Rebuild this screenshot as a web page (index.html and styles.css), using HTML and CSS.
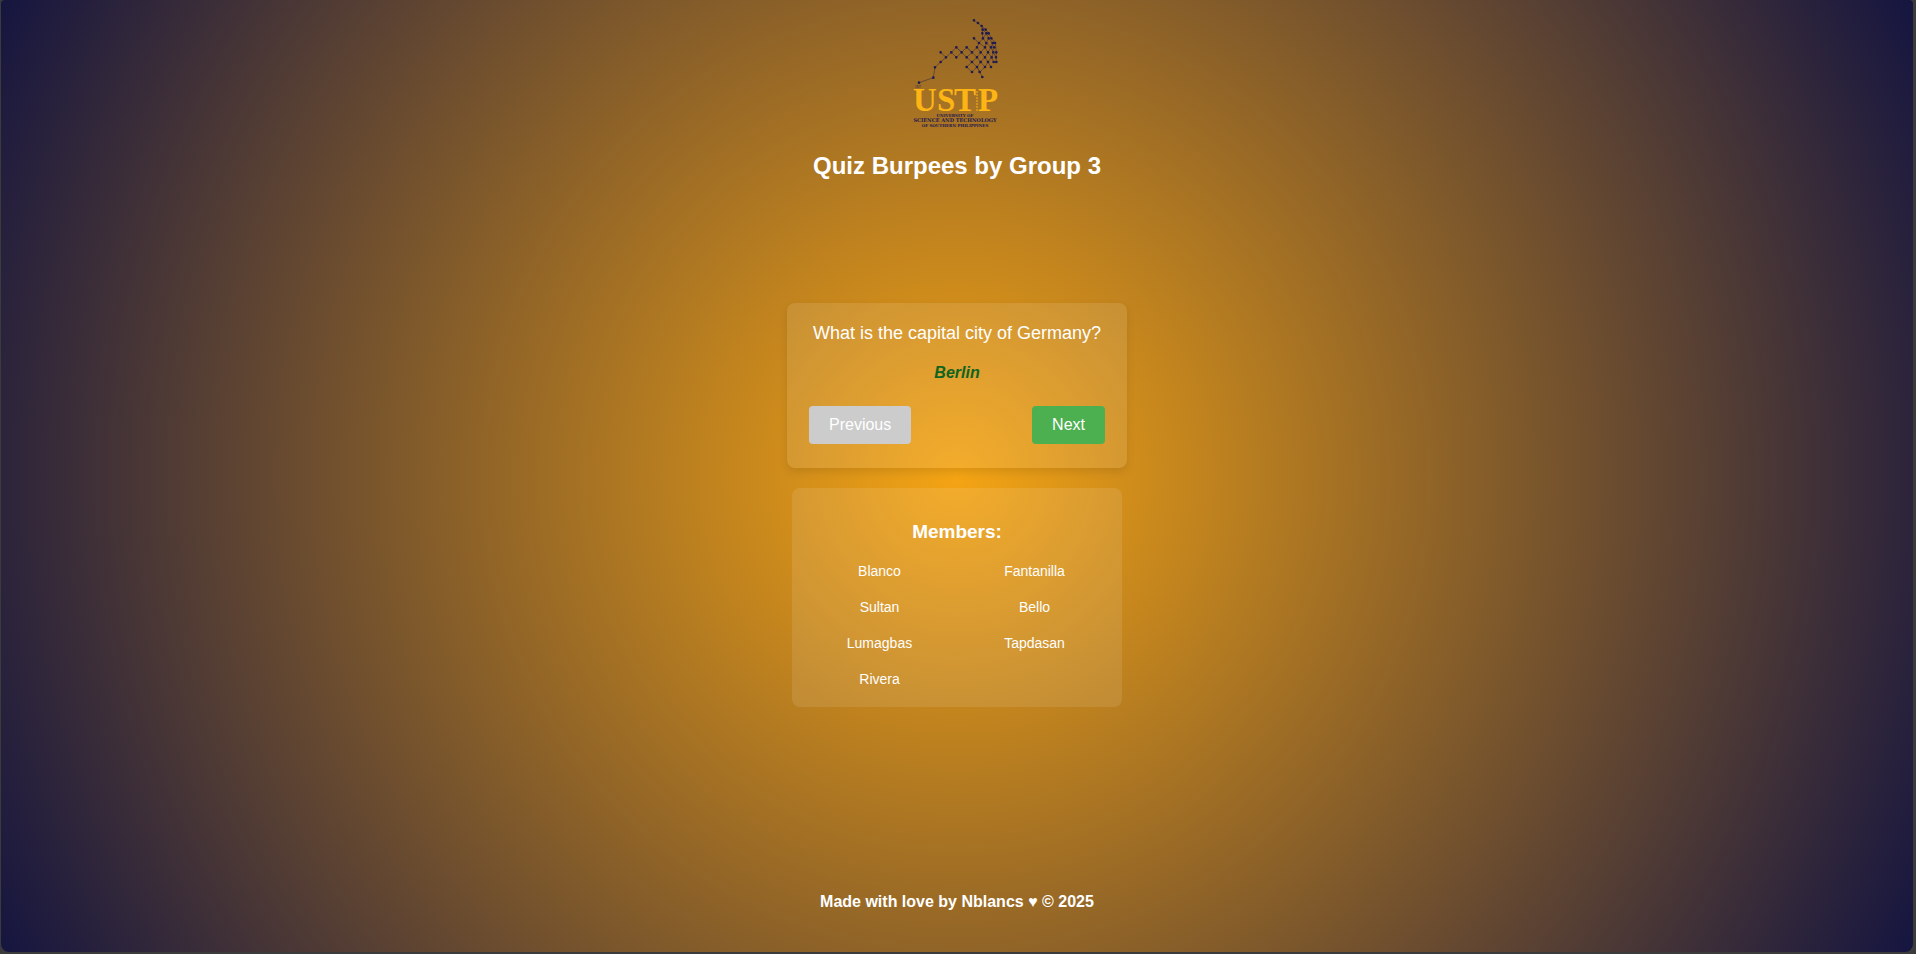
FILE: index.html
```
<!DOCTYPE html>
<html lang="en">
<head>
<meta charset="utf-8">
<title>Quiz Burpees</title>
<link rel="stylesheet" href="styles.css">
</head>
<body>
<div class="page">
  <header class="header">
    <svg class="logo" viewBox="7 0 100 120" role="img" aria-label="USTP logo">
      <g transform="scale(0.3333) translate(-30 -30)">
        <path class="logo-lines" d="M87 248L130 233L135 202L152 186L168 172L184 157L199 142L215 157L230 172L246 186L261 201L277 231M152 157L168 172M184 157L199 172L215 157L230 142L246 157L261 172L272 186L285 201M199 142L215 157M230 142L246 157L230 172M230 201L246 216L261 201L272 186L285 172L294 157L303 142L308 129M230 201L246 186L261 172L272 157L285 142L289 129L296 115M246 157L261 142L267 129L279 115L289 100M252 115L267 129L285 142L294 157L305 172L311 186M261 142L272 157L285 172L294 186L303 201M261 201L270 216L285 201L294 186L305 172L310 157M252 61L264 69L275 78L287 89L296 100L305 115L316 129L319 157L318 172L319 186L311 186M275 78L278 89L277 100L279 115L289 129L303 142L310 157L318 172M278 89L289 100L296 115L308 129L310 157"/>
        <path class="logo-dots" d="M87 248h0M130 233h0M135 202h0M152 186h0M168 172h0M152 157h0M184 157h0M199 142h0M199 172h0M215 157h0M230 142h0M230 172h0M246 157h0M246 186h0M230 201h0M246 216h0M261 142h0M261 172h0M261 201h0M277 231h0M269 216h0M272 157h0M272 186h0M285 142h0M285 172h0M285 201h0M294 157h0M294 186h0M303 142h0M303 201h0M305 172h0M310 157h0M311 186h0M319 157h0M318 172h0M319 186h0M252 115h0M267 129h0M289 129h0M308 129h0M315 129h0M279 115h0M296 115h0M304 115h0M277 100h0M289 100h0M296 100h0M278 89h0M287 89h0M252 61h0M264 69h0M275 78h0M313 142h0"/>
      </g>
      <text class="logo-year" x="15" y="78">1927</text>
      <g class="logo-name">
        <text x="13" y="101">U</text><text x="37" y="101">S</text><text x="54" y="101">T</text><text x="78" y="101">P</text>
      </g>
      <path class="logo-side" d="M77 81V101"/>
      <g class="logo-caption">
        <text x="55" y="107" font-size="4">UNIVERSITY OF</text>
        <text x="55" y="112" font-size="5">SCIENCE AND TECHNOLOGY</text>
        <text x="55" y="117" font-size="4">OF SOUTHERN PHILIPPINES</text>
      </g>
    </svg>
    <h1 class="title">Quiz Burpees by Group 3</h1>
  </header>
  <main class="main">
    <section class="quiz">
      <p class="question">What is the capital city of Germany?</p>
      <p class="answer">Berlin</p>
      <div class="actions">
        <button class="button" type="button" disabled>Previous</button>
        <button class="button" type="button">Next</button>
      </div>
    </section>
    <section class="members">
      <h2 class="members-title">Members:</h2>
      <ul class="members-list">
        <li>Blanco</li><li>Fantanilla</li>
        <li>Sultan</li><li>Bello</li>
        <li>Lumagbas</li><li>Tapdasan</li>
        <li>Rivera</li>
      </ul>
    </section>
  </main>
  <footer class="footer">Made with love by Nblancs ♥ © 2025</footer>
</div>
</body>
</html>
```
FILE: styles.css
```
* { box-sizing: border-box; }
html { background: #3b3b3b; }
body {
  margin: 0;
  padding: 0 3px 2px 1px;
  min-height: 100vh;
  display: flex;
  font-family: "Liberation Sans", Arial, sans-serif;
  color: #fff;
}
.page {
  flex: 1;
  display: flex;
  flex-direction: column;
  align-items: center;
  border-radius: 4px 4px 8px 8px;
  background: radial-gradient(circle, #f4a414, #151540);
}
.header {
  display: flex;
  flex-direction: column;
  align-items: center;
  padding-top: 10px;
}
.logo { width: 100px; height: 120px; }
.logo-lines { fill: none; stroke: #4a3540; stroke-width: 2; }
.logo-dots { fill: none; stroke: #1f1a4f; stroke-width: 8; stroke-linecap: round; }
.logo-year { font: 3px "Liberation Serif", serif; fill: #1f1a4f; }
.logo-name { font: bold 33px "Liberation Serif", serif; fill: #fdb515; }
.logo-side { stroke: #fdb515; stroke-width: 1; stroke-dasharray: 2 1; }
.logo-caption { font-family: "DejaVu Serif", serif; fill: #1f1a4f; text-anchor: middle; font-weight: bold; }
.title { margin: 20px 0; font-size: 24px; line-height: 32px; }
.main {
  flex: 1;
  display: flex;
  flex-direction: column;
  align-items: center;
  justify-content: center;
  gap: 20px;
  padding-bottom: 44px;
}
.quiz {
  width: 340px;
  padding: 20px 22px 24px;
  border-radius: 8px;
  background: rgba(255, 255, 255, 0.1);
  box-shadow: 0 4px 8px rgba(0, 0, 0, 0.1);
  text-align: center;
}
.question { margin: 0 0 20px; font-size: 18px; line-height: 21px; }
.answer { margin: 0 0 24px; font-size: 16px; line-height: 18px; font-weight: bold; font-style: italic; color: #0f6420; }
.actions { display: flex; justify-content: space-between; }
.button {
  padding: 10px 20px;
  border: 0;
  border-radius: 4px;
  background: #4caf50;
  color: #fff;
  font: 16px/18px "Liberation Sans", Arial, sans-serif;
}
.button:disabled { background: #ccc; }
.members {
  width: 330px;
  padding: 32px 10px 10px;
  border-radius: 8px;
  background: rgba(255, 255, 255, 0.1);
  text-align: center;
}
.members-title { margin: 0 0 10px; font-size: 19px; line-height: 23px; }
.members-list {
  display: grid;
  grid-template-columns: 1fr 1fr;
  margin: 0;
  padding: 0;
  list-style: none;
  font-size: 14px;
  line-height: 36px;
}
.footer { padding: 40px 0; font-size: 16px; line-height: 20px; font-weight: bold; }
```
